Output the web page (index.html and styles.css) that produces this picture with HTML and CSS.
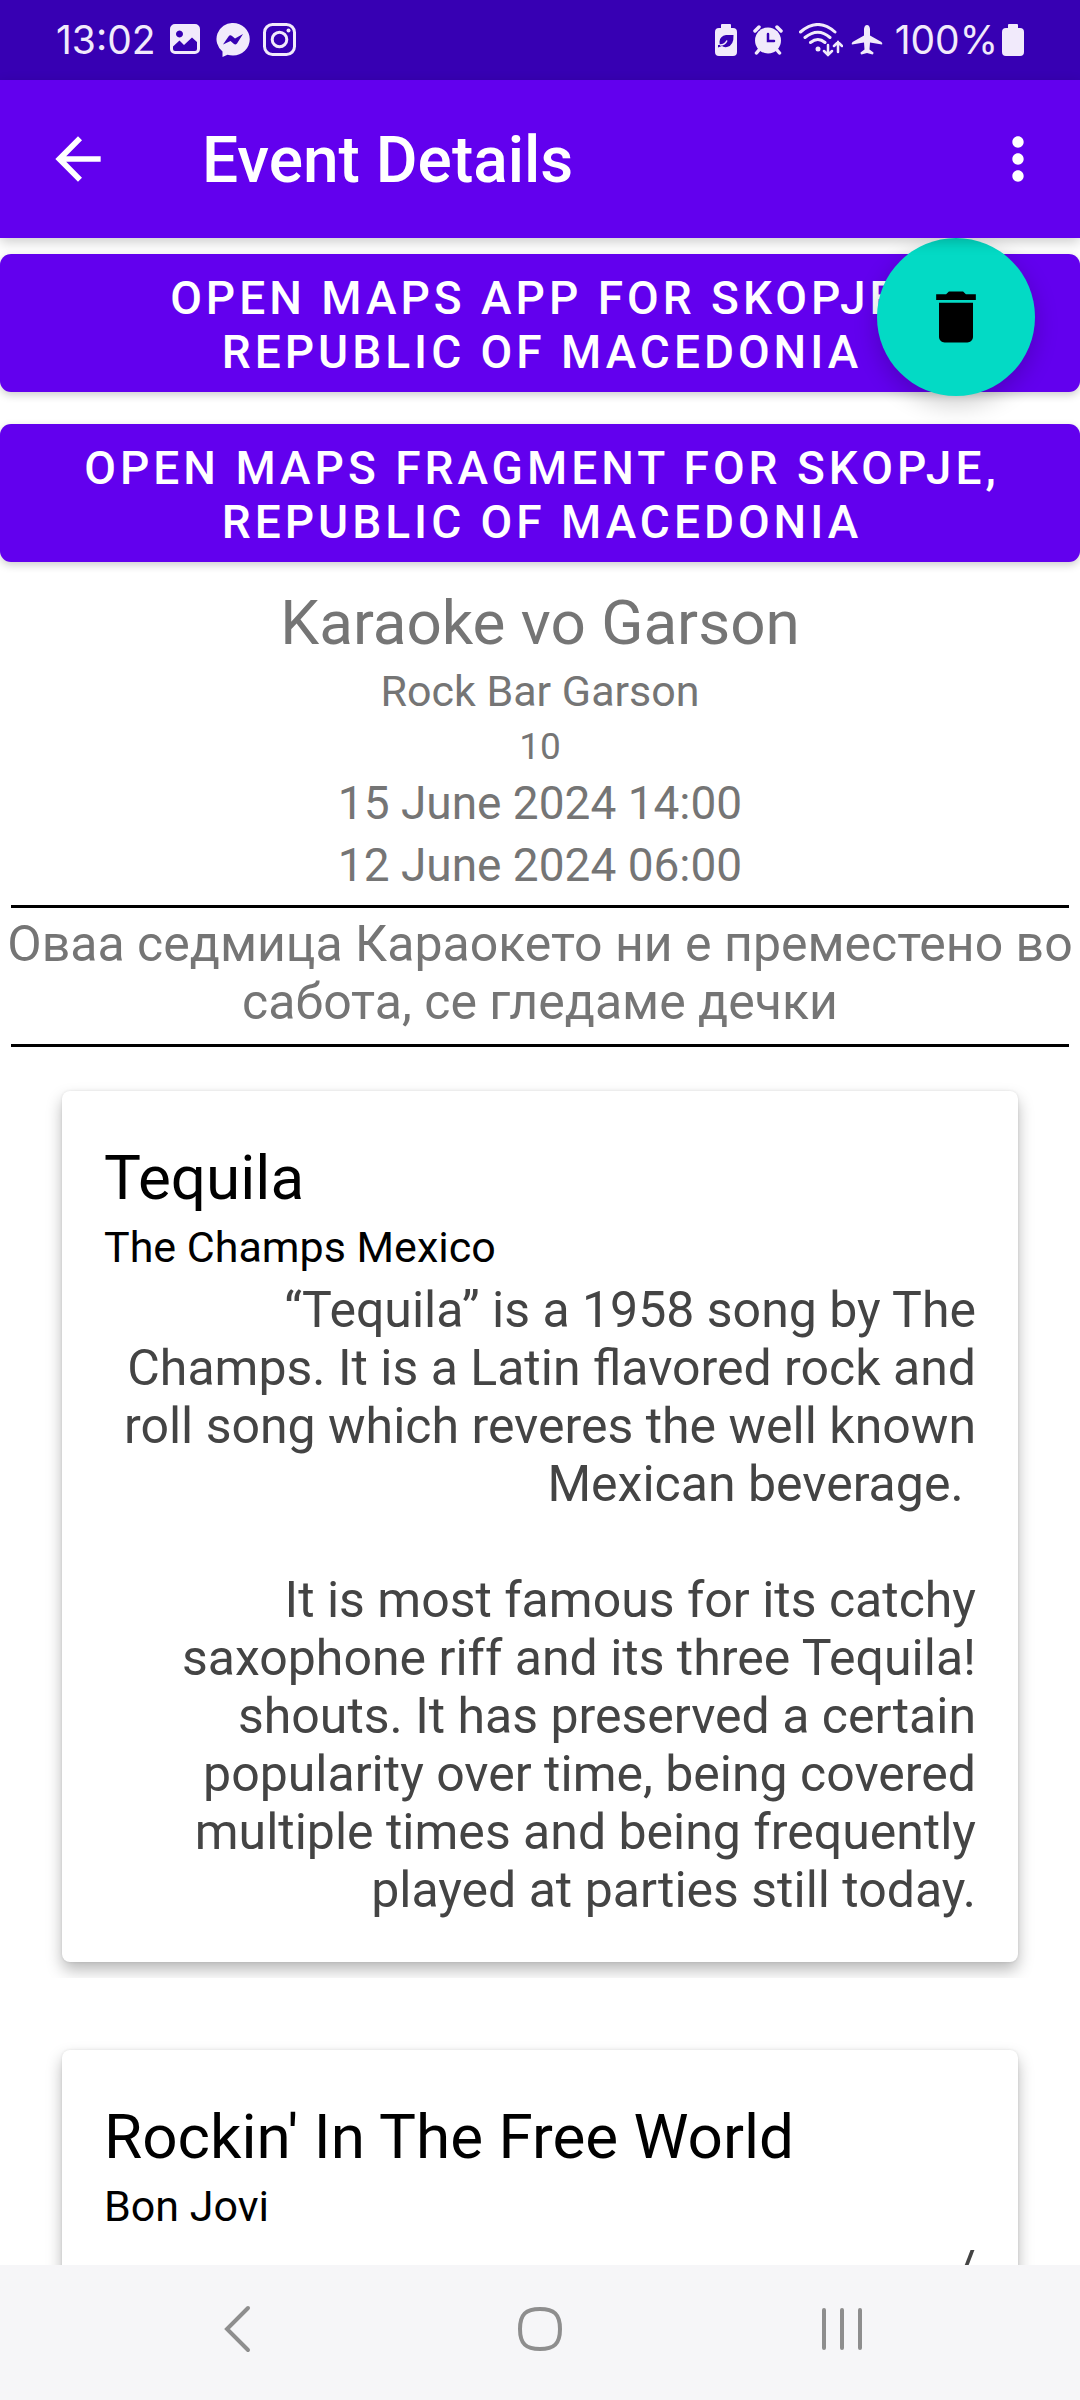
FILE: index.html
```html
<!DOCTYPE html>
<html lang="en">
<head>
<meta charset="utf-8">
<meta name="viewport" content="width=device-width, initial-scale=1">
<title>Event Details</title>
<link rel="stylesheet" href="styles.css">
</head>
<body>
<div class="status-bar">
  <div class="status-group status-left">
    <span>13:02</span>
    <svg class="status-icon" viewBox="0 0 34 34" aria-hidden="true"><path fill-rule="evenodd" fill="currentColor" d="M6 1h20a5 5 0 0 1 5 5v20a5 5 0 0 1-5 5H6a5 5 0 0 1-5-5V6a5 5 0 0 1 5-5zM10.500 7.500a3.500 3.500 0 1 0 .01 0zM4 23.500V26q0 2 2 2h20q2 0 2-2v-7l-5-4.500-8 7.500-4.500-4.500z"/></svg>
    <svg class="status-icon" viewBox="0 0 34 34" aria-hidden="true"><path fill="currentColor" d="M17 0a16.500 16 0 0 1 0 32.500q-3 0-5.500-.8L6.500 34V28.500A16 16 0 0 1 17 0z"/><path class="cutout" d="M7 21.500l5.500-8q1.500-2 3.500-.5l3 2.500 8-4.500-6 9.500q-1.500 1.500-3 .5L14.500 18z"/></svg>
    <svg class="status-icon" viewBox="0 0 34 34" fill="none" stroke="currentColor" stroke-width="3" aria-hidden="true"><rect x="1.500" y="1.500" width="30" height="30" rx="8"/><circle cx="16.500" cy="16.500" r="7.300"/><circle cx="25.500" cy="7.500" r="2" fill="currentColor" stroke="none"/></svg>
  </div>
  <div class="status-group status-right">
    <svg class="battery-icon power-saving" viewBox="0 0 22 32" aria-hidden="true"><path fill="currentColor" d="M7 0h8q1 0 1 1v3h2a4 4 0 0 1 4 4v20a4 4 0 0 1-4 4H4a4 4 0 0 1-4-4V8a4 4 0 0 1 4-4h2V1q0-1 1-1z"/><path class="cutout" d="M18.500 11H11q-6 1-6.500 6.500 0 2 .5 3.500H3v2.500l4-1.500q1.500 1.500 5 1 7-1.500 6.500-12z"/><path d="M5 21q5 0 7-4.500" fill="none" stroke="currentColor" stroke-width="1.500"/></svg>
    <svg class="alarm-icon" viewBox="0 0 30 30" fill="none" stroke="currentColor" stroke-width="3.500" stroke-linecap="round" aria-hidden="true"><circle cx="15" cy="15.500" r="13" fill="currentColor" stroke="none"/><path d="M2 6l4-4M28 6l-4-4M6 25l-2.500 3M24 25l2.500 3"/><path class="cutline" stroke-width="2.500" d="M15 9v7h6"/></svg>
    <svg class="wifi-icon" viewBox="0 0 44 34" fill="none" stroke="currentColor" stroke-width="3" stroke-linecap="round" aria-hidden="true"><path d="M1.500 9Q19-6 36 9M6 14.500Q19 4 31 14.500M11.500 19.500q7.500-6 14.500 0"/><circle cx="19" cy="26" r="2.500" fill="currentColor" stroke="none"/><path stroke-width="2.500" d="M29 22v10m-4-4l4 4 4-4M39 29V19m-4 4l4-4 4 4"/></svg>
    <svg class="plane-icon" viewBox="0 0 32 30" aria-hidden="true"><path fill="currentColor" d="M16 0q2.500 0 3 4v6.500L30.500 17q1.500 2 .5 2.500L19 17.500l-.5 7 4 3q0 2-1 2L16 28l-5.500 1.500q-1 0-1-2l4-3-.5-7L1 19.500q-1-.5.5-2.500L13 10.500V4q.5-4 3-4z"/></svg>
    <span>100%</span>
    <svg class="battery-icon" viewBox="0 0 22 32" aria-hidden="true"><path fill="currentColor" d="M7 0h8q1 0 1 1v3h2a4 4 0 0 1 4 4v20a4 4 0 0 1-4 4H4a4 4 0 0 1-4-4V8a4 4 0 0 1 4-4h2V1q0-1 1-1z"/></svg>
  </div>
</div>
<header class="app-bar">
  <button class="icon-button" type="button" aria-label="Navigate up"><svg viewBox="0 0 24 24"><path fill="currentColor" d="M20 11H7.830l5.590-5.590L12 4l-8 8 8 8 1.410-1.410L7.830 13H20v-2z"/></svg></button>
  <h1 class="app-title">Event Details</h1>
  <button class="icon-button" type="button" aria-label="More options"><svg viewBox="0 0 24 24"><path fill="currentColor" d="M12 8c1.100 0 2-.9 2-2s-.9-2-2-2-2 .9-2 2 .9 2 2 2zm0 2c-1.100 0-2 .9-2 2s.9 2 2 2 2-.9 2-2-.9-2-2-2zm0 6c-1.100 0-2 .9-2 2s.9 2 2 2 2-.9 2-2-.9-2-2-2z"/></svg></button>
</header>
<main class="content">
  <button class="fab" type="button" aria-label="Delete event"><svg viewBox="0 0 24 24"><path fill="currentColor" d="M6 19c0 1.100.9 2 2 2h8c1.100 0 2-.9 2-2V7H6v12zM19 4h-3.500l-1-1h-5l-1 1H5v2h14V4z"/></svg></button>
  <div class="actions">
    <button class="map-button" type="button">Open maps app for Skopje, Republic of Macedonia</button>
    <button class="map-button" type="button">Open maps fragment for Skopje, Republic of Macedonia</button>
  </div>
  <section class="event">
    <h2 class="event-name">Karaoke vo Garson</h2>
    <p class="event-venue">Rock Bar Garson</p>
    <p class="event-count">10</p>
    <p class="event-date">15 June 2024 14:00</p>
    <p class="event-date">12 June 2024 06:00</p>
    <hr class="divider">
    <p class="event-description" lang="mk">Оваа седмица Караокето ни е преместено во сабота, се гледаме дечки</p>
    <hr class="divider">
  </section>
  <ul class="songs">
    <li class="song">
      <article class="card">
        <h3 class="song-title">Tequila</h3>
        <p class="song-artist">The Champs Mexico</p>
        <div class="song-text">“Tequila” is a 1958 song by The Champs. It is a Latin flavored rock and roll song which reveres the well known Mexican beverage.&nbsp;

It is most famous for its catchy saxophone riff and its three Tequila! shouts. It has preserved a certain popularity over time, being covered multiple times and being frequently played at parties still today.</div>
      </article>
    </li>
    <li class="song">
      <article class="card">
        <h3 class="song-title">Rockin' In The Free World</h3>
        <p class="song-artist">Bon Jovi</p>
        <div class="song-text">/</div>
      </article>
    </li>
  </ul>
</main>
<nav class="system-nav" aria-label="System">
  <button class="nav-button" type="button" aria-label="Back"><svg viewBox="0 0 48 48"><path d="M34 3L13 24l21 21"/></svg></button>
  <button class="nav-button" type="button" aria-label="Home"><svg viewBox="0 0 48 48"><path d="M24 4c14 0 20 5 20 20s-6 20-20 20S4 39 4 24 10 4 24 4z"/></svg></button>
  <button class="nav-button" type="button" aria-label="Recent apps"><svg viewBox="0 0 48 48"><path d="M6 5v38M24 5v38M42 5v38"/></svg></button>
</nav>
</body>
</html>
```
FILE: styles.css
```css
* { box-sizing: border-box; }

body {
  margin: 0;
  height: 100vh;
  display: flex;
  flex-direction: column;
  background: #fff;
  color: #000;
  font-family: Roboto, "Noto Sans", sans-serif;
}

h1, h2, h3, p, ul { margin: 0; padding: 0; font-weight: 400; }

button {
  margin: 0;
  padding: 0;
  border: 0;
  background: none;
  color: inherit;
  font: inherit;
}

svg { display: block; flex: none; }

.status-bar {
  flex: none;
  height: 80px;
  padding: 0 56px;
  display: flex;
  align-items: center;
  justify-content: space-between;
  background: #3700b3;
  color: #f1eafb;
  font-family: Inter, sans-serif;
  font-size: 39px;
  line-height: 48px;
}

.status-group { display: flex; align-items: center; }
.status-left { gap: 13px; }
.status-right { gap: 4px; }
.status-icon { width: 34px; height: 34px; }
.battery-icon { width: 22px; height: 32px; }
.power-saving { margin-right: 12px; }
.alarm-icon { width: 30px; height: 30px; margin-right: 12px; }
.wifi-icon { width: 44px; height: 34px; margin-right: 4px; }
.plane-icon { width: 32px; height: 30px; margin-right: 8px; }
.cutout { fill: #3700b3; }
.cutline { stroke: #3700b3; }

.app-bar {
  flex: none;
  position: relative;
  z-index: 2;
  height: 158px;
  padding: 0 28px 0 44px;
  display: flex;
  align-items: center;
  gap: 90px;
  background: #6200ee;
  color: #fff;
  box-shadow: 0 4px 12px rgba(0, 0, 0, 0.2);
}

.app-title {
  flex: 1;
  padding-top: 4px;
  font-size: 64px;
  line-height: 72px;
  font-weight: 500;
}

.icon-button, .icon-button svg { width: 68px; height: 68px; }

.content {
  flex: 1;
  min-height: 0;
  position: relative;
  overflow-y: auto;
  scrollbar-width: none;
}

.fab {
  position: absolute;
  top: 0;
  right: 45px;
  z-index: 1;
  width: 158px;
  height: 158px;
  display: flex;
  align-items: center;
  justify-content: center;
  border-radius: 50%;
  background: #03dac5;
  color: #000;
  box-shadow: 0 8px 24px rgba(0, 0, 0, 0.2);
}

.fab svg { width: 68px; height: 68px; }

.actions {
  display: flex;
  flex-direction: column;
  gap: 32px;
  padding: 16px 0;
}

.map-button {
  min-height: 138px;
  padding: 17px 43px 13px 47px;
  border-radius: 11px;
  background: #6200ee;
  color: #fff;
  font-size: 46px;
  line-height: 54px;
  font-weight: 500;
  letter-spacing: 4px;
  text-transform: uppercase;
  box-shadow: 0 3px 8px rgba(0, 0, 0, 0.2);
}

.event {
  padding-top: 8px;
  text-align: center;
  color: #757575;
}

.event-name { font-size: 62px; line-height: 74px; }
.event-venue { font-size: 43px; line-height: 62px; }
.event-count { font-size: 37px; line-height: 50px; }
.event-date { font-size: 46px; line-height: 62px; }

.divider {
  height: 3px;
  margin: 9px 11px 0;
  border: 0;
  background: #000;
}

.event-description {
  padding: 7px 0 4px;
  font-size: 50px;
  line-height: 58px;
}

.songs { list-style: none; }

.song {
  padding: 44px 62px 16px;
  margin-bottom: 28px;
  overflow: hidden;
}

.card {
  padding: 47px 42px 43px;
  border-radius: 8px;
  background: #fff;
  box-shadow: 0 8px 16px rgba(0, 0, 0, 0.28), 0 0 3px rgba(0, 0, 0, 0.1);
}

.song-title { font-size: 62px; line-height: 80px; }
.song-artist { font-size: 43px; line-height: 58px; }

.song-text {
  margin-top: 5px;
  color: #444;
  font-size: 50px;
  line-height: 58px;
  text-align: right;
  white-space: pre-line;
}

.system-nav {
  flex: none;
  height: 135px;
  padding: 0 8% 7px;
  display: grid;
  grid-template-columns: repeat(3, 1fr);
  background: #f6f6f8;
  color: #8e8e8e;
}

.nav-button {
  display: flex;
  align-items: center;
  justify-content: center;
}

.nav-button svg {
  width: 48px;
  height: 48px;
  fill: none;
  stroke: currentColor;
  stroke-width: 4;
  stroke-linecap: round;
}
```
